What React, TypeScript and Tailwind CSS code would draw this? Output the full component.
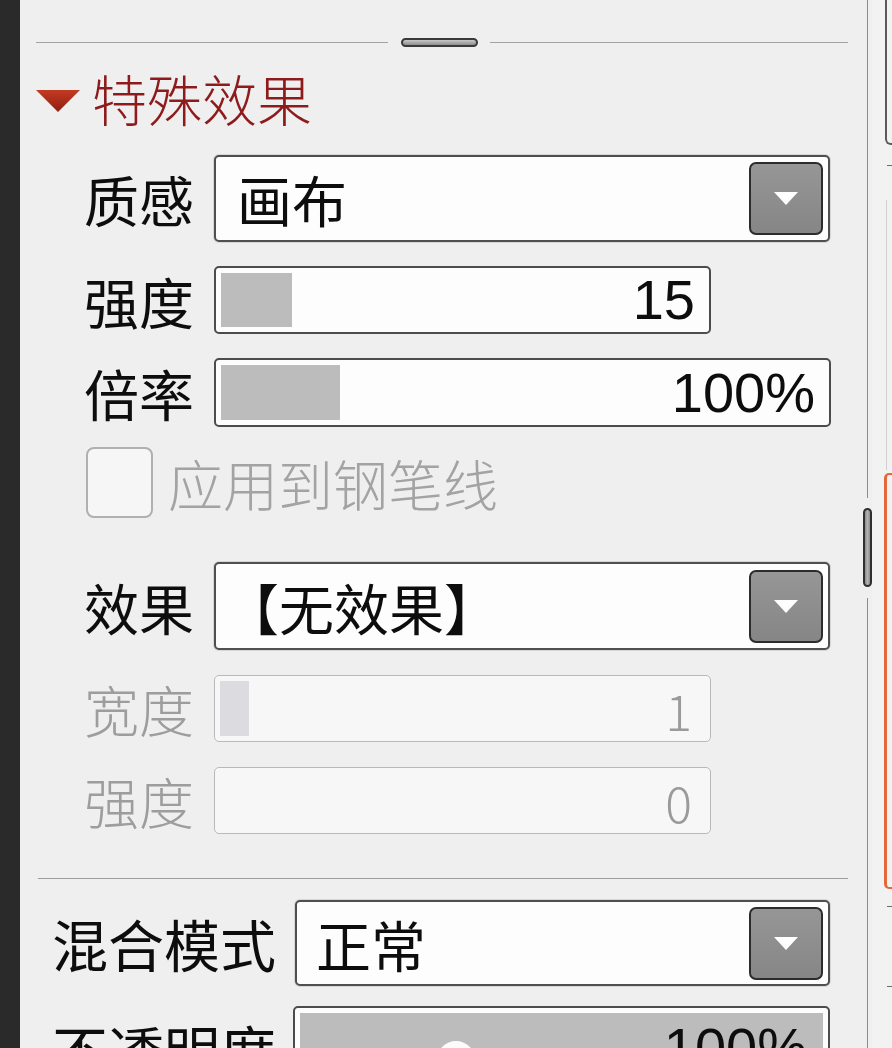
import React from "react";

const CJK = "font-['Noto_Sans_CJK_SC','Noto_Sans_CJK_JP',sans-serif]";
const NUM = "font-['Liberation_Sans','Arial',sans-serif]";

function DropButton() {
  return (
    <div className="w-[74px] h-[73px] mr-[5px] rounded-[7px] border-2 border-[#2c2c2c] bg-gradient-to-b from-[#979696] to-[#878686] flex items-center justify-center shrink-0">
      <svg width="24" height="13" viewBox="0 0 24 13">
        <polygon points="0,0 24,0 12,13" fill="#ffffff" />
      </svg>
    </div>
  );
}

function Dropdown({ text, widthClass, plClass }: { text: string; widthClass: string; plClass: string }) {
  return (
    <div className={`${widthClass} h-full flex items-center justify-between border-2 border-[#4f4f4f] rounded-[5px] bg-[#fdfdfd] shadow-[0_0_0_1px_#d6d6d6]`}>
      <span className={`${CJK} ${plClass} text-[55px] leading-none text-[#0d0d0d]`}>{text}</span>
      <DropButton />
    </div>
  );
}

function Slider({
  value,
  widthClass,
  fillClass,
  disabled,
}: {
  value: string;
  widthClass: string;
  fillClass: string;
  disabled?: boolean;
}) {
  return (
    <div
      className={`${widthClass} h-full flex items-stretch justify-between rounded-[5px] p-[5px] ${
        disabled ? "border-[1.5px] border-[#b9b9b9] bg-[#f7f7f8]" : "border-2 border-[#4c4c4c] bg-[#fdfdfd]"
      }`}
    >
      <div className={`${fillClass} ${disabled ? "bg-[#dcdbe0]" : "bg-[#bdbcbd]"}`} />
      <span
        className={`self-center leading-none ${
          disabled ? `${CJK} font-light text-[50px] text-[#9a9a9a] pr-[13px]` : `${NUM} text-[56px] text-[#0d0d0d] pr-[9px]`
        }`}
      >
        {value}
      </span>
    </div>
  );
}

function Label({ text, disabled }: { text: string; disabled?: boolean }) {
  return (
    <div className="w-[178px] pl-[48px] shrink-0 flex items-center">
      <span
        className={`${CJK} text-[55px] leading-none ${disabled ? "font-light text-[#9d9d9d]" : "text-[#0d0d0d]"}`}
      >
        {text}
      </span>
    </div>
  );
}

export default function App() {
  return (
    <div className="w-[892px] h-[1048px] flex overflow-hidden bg-[#f0eff0]">
      {/* left dark strip */}
      <div className="w-[20px] h-full bg-[#2b2a2b] shrink-0" />

      {/* main panel */}
      <div className="w-[842px] h-full shrink-0 flex flex-col pl-[16px] pr-[14px] pt-[37px] overflow-hidden">
        {/* top separator with handle */}
        <div className="h-[10px] shrink-0 flex items-center">
          <div className="w-[352px] h-px bg-[#a3a3a3]" />
          <div className="ml-[13px] w-[77px] h-[9px] rounded-full border-2 border-[#3a3a3a] bg-gradient-to-b from-[#c8c8c8] to-[#8e8e8e]" />
          <div className="ml-[12px] flex-1 h-px bg-[#a3a3a3]" />
        </div>

        {/* section title */}
        <div className="mt-[23px] h-[55px] shrink-0 flex items-center">
          <svg width="44" height="22" viewBox="0 0 44 22" className="mt-[6px]">
            <defs>
              <linearGradient id="tri" x1="0" y1="0" x2="0" y2="1">
                <stop offset="0" stopColor="#c43a22" />
                <stop offset="1" stopColor="#8e1e12" />
              </linearGradient>
            </defs>
            <polygon points="0,0 44,0 22,22" fill="url(#tri)" />
          </svg>
          <span className={`${CJK} ml-[12px] text-[55px] leading-none font-light text-[#8e1b1b]`}>特殊效果</span>
        </div>

        {/* 质感 */}
        <div className="mt-[30px] h-[87px] shrink-0 flex">
          <Label text="质感" />
          <Dropdown text="画布" widthClass="w-[616px]" plClass="pl-[21px]" />
        </div>

        {/* 强度 */}
        <div className="mt-[24px] h-[68px] shrink-0 flex">
          <Label text="强度" />
          <Slider value="15" widthClass="w-[497px]" fillClass="w-[71px]" />
        </div>

        {/* 倍率 */}
        <div className="mt-[24px] h-[69px] shrink-0 flex">
          <Label text="倍率" />
          <Slider value="100%" widthClass="w-[617px]" fillClass="w-[119px]" />
        </div>

        {/* checkbox */}
        <div className="mt-[20px] h-[71px] shrink-0 flex items-center pl-[50px]">
          <div className="w-[67px] h-[71px] rounded-[8px] border-2 border-[#b0b0b0] bg-[#f6f6f6] shrink-0" />
          <span className={`${CJK} ml-[15px] text-[55px] leading-none font-light text-[#a3a3a3]`}>应用到钢笔线</span>
        </div>

        {/* 效果 */}
        <div className="mt-[44px] h-[88px] shrink-0 flex">
          <Label text="效果" />
          <Dropdown text="【无效果】" widthClass="w-[616px]" plClass="pl-[8px]" />
        </div>

        {/* 宽度 disabled */}
        <div className="mt-[25px] h-[67px] shrink-0 flex">
          <Label text="宽度" disabled />
          <Slider value="1" widthClass="w-[497px]" fillClass="w-[29px]" disabled />
        </div>

        {/* 强度 disabled */}
        <div className="mt-[25px] h-[67px] shrink-0 flex">
          <Label text="强度" disabled />
          <Slider value="0" widthClass="w-[497px]" fillClass="w-0" disabled />
        </div>

        {/* separator */}
        <div className="mt-[44px] h-px shrink-0 bg-[#9d9d9d] ml-[2px]" />

        {/* 混合模式 */}
        <div className="mt-[21px] h-[86px] shrink-0 flex">
          <div className="w-[259px] pl-[16px] shrink-0 flex items-center">
            <span className={`${CJK} text-[56px] leading-none text-[#0d0d0d]`}>混合模式</span>
          </div>
          <Dropdown text="正常" widthClass="w-[535px]" plClass="pl-[19px]" />
        </div>

        {/* 不透明度 */}
        <div className="mt-[20px] h-[86px] flex shrink-0">
          <div className="w-[257px] pl-[16px] shrink-0 flex items-center">
            <span className={`${CJK} text-[56px] leading-none text-[#0d0d0d]`}>不透明度</span>
          </div>
          <div className="w-[537px] h-full border-2 border-[#4c4c4c] rounded-[5px] bg-[#fdfdfd] p-[5px]">
            <div className="relative h-full bg-[#bdbcbd] flex items-start justify-end">
              <span className={`${NUM} mt-[7px] pr-[16px] text-[56px] leading-none text-[#0d0d0d]`}>100%</span>
              <div className="absolute left-[137px] top-[28px] w-[38px] h-[38px] rounded-full bg-[#fbfbfb]" />
            </div>
          </div>
        </div>
      </div>

      {/* scrollbar column */}
      <div className="w-[10px] h-full shrink-0 flex flex-col items-center">
        <div className="w-px h-[498px] shrink-0 bg-[#8c8c8c] ml-[1px]" />
        <div className="mt-[10px] w-[9px] h-[79px] shrink-0 rounded-full border-2 border-[#2f2f2f] bg-gradient-to-r from-[#8d8c8d] via-[#b3b2b3] to-[#8d8c8d]" />
        <div className="mt-[11px] w-px flex-1 bg-[#8c8c8c] ml-[1px]" />
      </div>

      {/* far right panel */}
      <div className="w-[20px] h-full shrink-0 flex flex-col bg-[#f3f2f3]">
        <div className="ml-[13px] h-[145px] shrink-0 border-l-2 border-b-2 border-[#5a5a5a] rounded-bl-[6px]" />
        <div className="mt-[20px] ml-[15px] h-px shrink-0 bg-[#6a6a6a]" />
        <div className="mt-[34px] ml-[14px] w-px h-[270px] shrink-0 bg-[#cfcfcf]" />
        <div className="mt-[3px] ml-[12px] h-[416px] shrink-0 border-l-[3px] border-t-2 border-b-2 border-[#e3683a] rounded-l-[5px]" />
        <div className="mt-[17px] ml-[15px] h-px shrink-0 bg-[#6a6a6a]" />
        <div className="mt-[79px] ml-[15px] h-px shrink-0 bg-[#6a6a6a]" />
      </div>
    </div>
  );
}
